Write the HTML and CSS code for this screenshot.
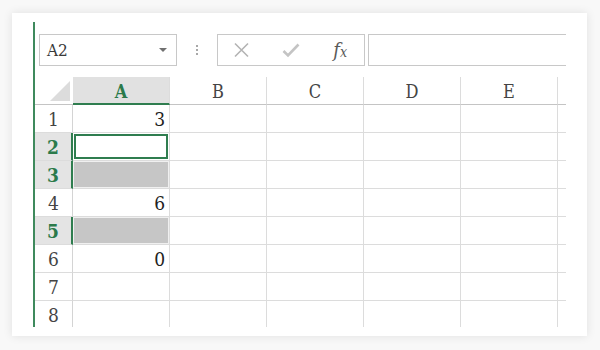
FILE: index.html
```html
<!DOCTYPE html>
<html>
<head>
<meta charset="utf-8">
<link rel="stylesheet" href="styles.css">
</head>
<body>
<div class="card">
  <div class="sheet">
    <div class="toolbar">
      <div class="namebox">
        <span class="name">A2</span>
        <span class="caret"></span>
      </div>
      <div class="grip"><i></i><i></i><i></i></div>
      <div class="fbtns">
        <span class="fbtn">
          <svg width="17" height="16" viewBox="0 0 17 16"><path d="M2 1.5 L15 14.5 M15 1.5 L2 14.5" stroke="#b4b4b4" stroke-width="1.6" fill="none"/></svg>
        </span>
        <span class="fbtn">
          <svg width="18" height="15" viewBox="0 0 18 15"><path d="M1.5 8 L6 12.5 L16.5 1.5" stroke="#c4c4c4" stroke-width="2.6" fill="none" stroke-linejoin="miter"/></svg>
        </span>
        <span class="fbtn fx"><span class="f">f</span><span class="x">x</span></span>
      </div>
      <div class="finput"></div>
    </div>
    <div class="grid">
      <div class="corner"><svg width="38" height="26" viewBox="0 0 38 26"><polygon points="15,24 35,24 35,4" fill="#dcdcdc"/></svg></div>
      <div class="ch sel">A</div>
      <div class="ch">B</div>
      <div class="ch">C</div>
      <div class="ch">D</div>
      <div class="ch">E</div>
      <div class="ch end"></div>

      <div class="rh">1</div>
      <div class="c num">3</div><div class="c"></div><div class="c"></div><div class="c"></div><div class="c"></div><div class="c end"></div>

      <div class="rh sel">2</div>
      <div class="c active"></div><div class="c"></div><div class="c"></div><div class="c"></div><div class="c"></div><div class="c end"></div>

      <div class="rh sel">3</div>
      <div class="c shade"></div><div class="c"></div><div class="c"></div><div class="c"></div><div class="c"></div><div class="c end"></div>

      <div class="rh">4</div>
      <div class="c num">6</div><div class="c"></div><div class="c"></div><div class="c"></div><div class="c"></div><div class="c end"></div>

      <div class="rh sel">5</div>
      <div class="c shade"></div><div class="c"></div><div class="c"></div><div class="c"></div><div class="c"></div><div class="c end"></div>

      <div class="rh">6</div>
      <div class="c num">0</div><div class="c"></div><div class="c"></div><div class="c"></div><div class="c"></div><div class="c end"></div>

      <div class="rh">7</div>
      <div class="c"></div><div class="c"></div><div class="c"></div><div class="c"></div><div class="c"></div><div class="c end"></div>

      <div class="rh">8</div>
      <div class="c"></div><div class="c"></div><div class="c"></div><div class="c"></div><div class="c"></div><div class="c end"></div>
    </div>
  </div>
</div>
</body>
</html>
```

FILE: styles.css
```css
* { box-sizing: border-box; }
html, body { margin: 0; padding: 0; }
body {
  background: #f8f8f8;
  width: 600px;
  height: 350px;
  padding: 13px 0 0 12px;
  font-family: "DejaVu Serif", serif;
  font-stretch: condensed;
  overflow: hidden;
}
.card {
  width: 575px;
  height: 323px;
  background: #fff;
  box-shadow: 0 0 9px rgba(0,0,0,0.10);
  padding: 9px 0 0 21px;
}
.sheet {
  width: 533px;
  height: 305px;
  border-left: 2px solid #3f8a5d;
  overflow: hidden;
}
.toolbar {
  display: flex;
  align-items: center;
  margin: 12px 0 0 4px;
  height: 32px;
}
.namebox {
  width: 138px;
  height: 32px;
  border: 1px solid #c8c8c8;
  display: flex;
  align-items: center;
  justify-content: space-between;
  padding: 0 9px 0 7px;
}
.name {
  font-family: "DejaVu Serif", serif;
  font-stretch: condensed;
  font-size: 17px;
  color: #3a3a3a;
}
.caret {
  width: 0;
  height: 0;
  border-left: 4px solid transparent;
  border-right: 4px solid transparent;
  border-top: 4px solid #707070;
}
.grip {
  width: 40px;
  display: flex;
  flex-direction: column;
  align-items: center;
  gap: 2px;
}
.grip i {
  display: block;
  width: 2px;
  height: 2px;
  background: #a8a8a8;
}
.fbtns {
  width: 148px;
  height: 32px;
  border: 1px solid #c8c8c8;
  display: flex;
  align-items: center;
}
.fbtn {
  width: 49px;
  display: flex;
  justify-content: center;
  align-items: center;
}
.fbtn svg { display: block; }
.fx {
  font-style: italic;
  color: #5a5a5a;
  font-family: "DejaVu Serif", serif;
  padding-left: 2px;
}
.fx .f { font-size: 20px; }
.fx .x { font-size: 14px; margin-left: 0; position: relative; top: 2px; }
.finput {
  margin-left: 3px;
  width: 199px;
  height: 32px;
  border: 1px solid #c8c8c8;
  border-right: none;
}
.grid {
  margin-top: 11px;
  display: grid;
  grid-template-columns: 38px 97px 97px 97px 97px 97px 9px;
  grid-auto-rows: 28px;
}
.corner {
  border-bottom: 1px solid #c4c4c4;
}
.corner svg { display: block; }
.ch {
  display: flex;
  align-items: center;
  justify-content: center;
  font-size: 18px;
  color: #444;
  border-right: 1px solid #dcdcdc;
  border-bottom: 1px solid #c4c4c4;
  padding-top: 2px;
}
.ch.sel {
  background: #e1e1e1;
  color: #2b7a4b;
  font-weight: bold;
  border-bottom: 2px solid #2f7d4f;
}
.ch.end { border-right: none; }
.rh {
  display: flex;
  align-items: center;
  justify-content: center;
  font-size: 19px;
  color: #444;
  border-right: 1px solid #d4d4d4;
  border-bottom: 1px solid #dcdcdc;
  padding-top: 1px;
}
.rh.sel {
  background: #e4e4e4;
  color: #2b7a4b;
  font-weight: bold;
  border-right: 2px solid #2f7d4f;
}
.c {
  border-right: 1px solid #dcdcdc;
  border-bottom: 1px solid #dcdcdc;
  font-size: 19px;
  color: #222;
  display: flex;
  align-items: center;
  justify-content: flex-end;
  padding: 1px 4px 0 0;
}
.c.end { border-right: none; }
.c.active {
  box-shadow: inset 0 0 0 1px #fff, inset 0 0 0 3px #2f7d4f;
}
.c.shade {
  background: #c6c6c6;
  box-shadow: inset 0 0 0 1px #f0f0f0;
}
```
